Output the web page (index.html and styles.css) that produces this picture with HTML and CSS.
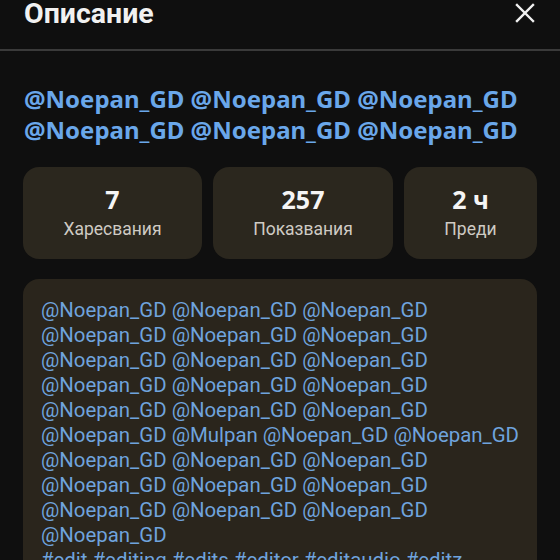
FILE: index.html
```html
<!DOCTYPE html>
<html lang="bg">
<head>
<meta charset="utf-8">
<title>Описание</title>
<link rel="stylesheet" href="styles.css">
</head>
<body>
<div class="sheet">
  <header class="top">
    <h1 class="title">Описание</h1>
    <button class="close" aria-label="Затвори">
      <svg viewBox="0 0 24 24" width="24" height="24"><path d="M4 4 L20 20 M20 4 L4 20" stroke="#f1f1f1" stroke-width="2.4" stroke-linecap="square" fill="none"/></svg>
    </button>
  </header>
  <main class="content">
    <h2 class="headline">@Noepan_GD @Noepan_GD @Noepan_GD @Noepan_GD @Noepan_GD @Noepan_GD</h2>
    <div class="stats">
      <div class="stat"><span class="num">7</span><span class="lbl">Харесвания</span></div>
      <div class="stat"><span class="num">257</span><span class="lbl">Показвания</span></div>
      <div class="stat"><span class="num">2 ч</span><span class="lbl">Преди</span></div>
    </div>
    <div class="desc">
      <p class="desc-text">@Noepan_GD @Noepan_GD @Noepan_GD @Noepan_GD @Noepan_GD @Noepan_GD @Noepan_GD @Noepan_GD @Noepan_GD @Noepan_GD @Noepan_GD @Noepan_GD @Noepan_GD @Noepan_GD @Noepan_GD @Noepan_GD @Mulpan @Noepan_GD @Noepan_GD @Noepan_GD @Noepan_GD @Noepan_GD @Noepan_GD @Noepan_GD @Noepan_GD @Noepan_GD @Noepan_GD @Noepan_GD @Noepan_GD<br>#edit #editing #edits #editor #editaudio #editz</p>
    </div>
  </main>
</div>
</body>
</html>
```
FILE: styles.css
```css
* { box-sizing: border-box; }
html, body { margin: 0; padding: 0; }
body {
  background: #0f0f0f;
  font-family: Roboto, "Noto Sans", sans-serif;
  color: #f1f1f1;
  width: 560px;
  height: 560px;
  overflow: hidden;
}
.top {
  height: 51px;
  display: flex;
  align-items: flex-start;
  justify-content: space-between;
  padding: 0 24px 0 24px;
  border-bottom: 2px solid #3a3a3a;
}
.title {
  margin: 0;
  font-size: 28.5px;
  font-weight: 700;
  line-height: 28px;
  color: #f1f1f1;
}
.close {
  background: none;
  border: 0;
  padding: 0;
  margin: 1px -1px 0 0;
  width: 24px;
  height: 24px;
  display: flex;
}
.content {
  padding: 32px 23px 0 23px;
}
.headline {
  margin: 0 0 0 1px;
  font-family: "Noto Sans", sans-serif;
  font-weight: 700;
  font-size: 24px;
  line-height: 31px;
  color: #6aa7ea;
}
.stats {
  margin-top: 22px;
  display: grid;
  grid-template-columns: 179fr 180fr 133fr;
  gap: 11px;
}
.stat {
  height: 92px;
  background: #2b271e;
  border-radius: 16px;
  display: flex;
  flex-direction: column;
  align-items: center;
  justify-content: center;
  gap: 5px;
}
.num {
  font-family: "Noto Sans", sans-serif;
  font-weight: 700;
  font-size: 25px;
  line-height: 28px;
  color: #f5f5f5;
  margin-top: -2px;
}
.lbl {
  font-size: 17.5px;
  line-height: 22px;
  color: #cfcbc4;
}
.desc {
  margin-top: 20px;
  background: #2a251c;
  border-radius: 16px;
  padding: 19px 14px 20px 18px;
}
.desc-text {
  margin: 0;
  font-size: 20.4px;
  line-height: 25px;
  color: #6fa3dd;
}
```
